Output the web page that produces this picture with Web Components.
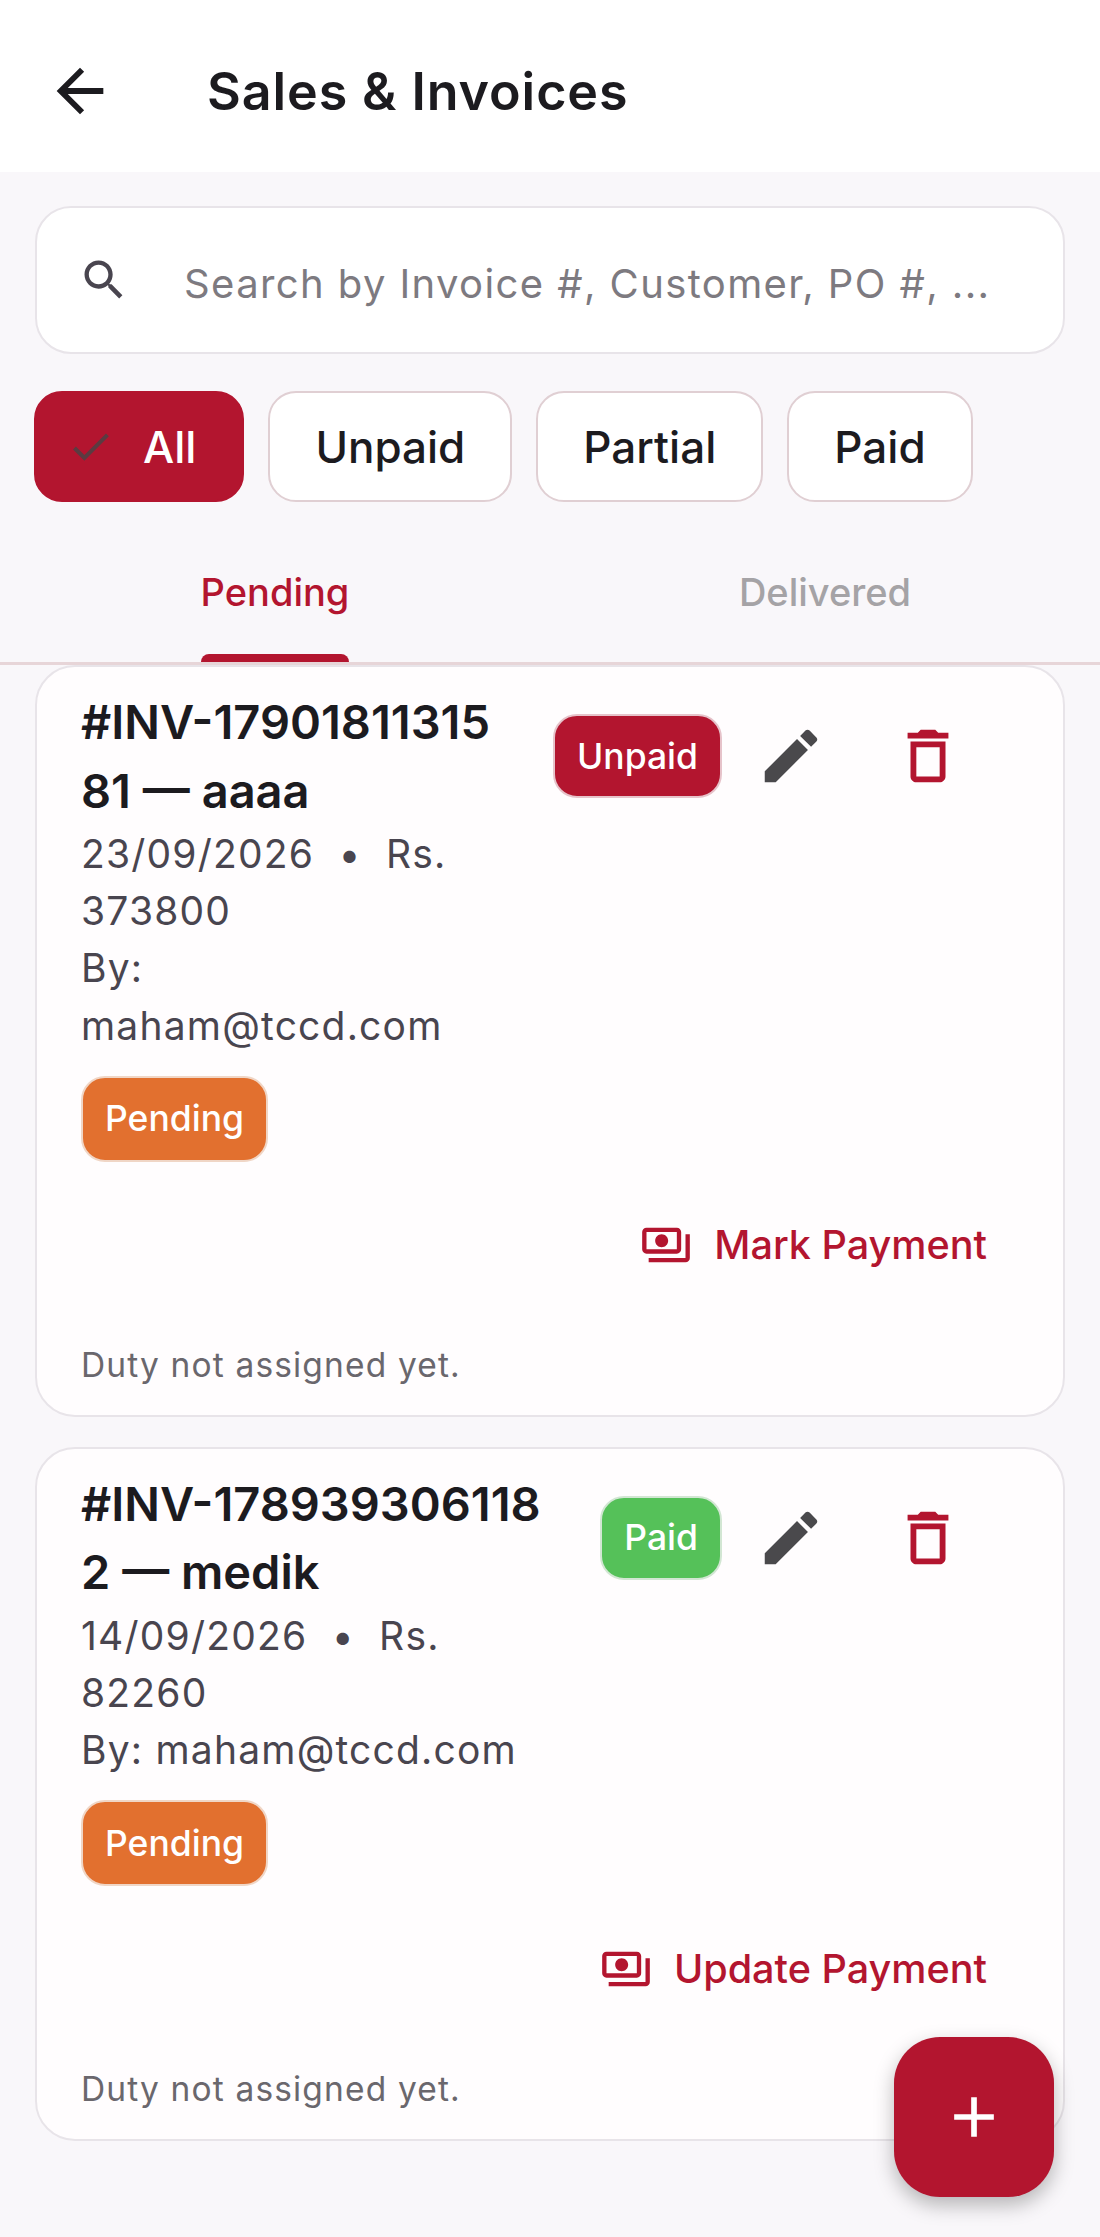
<!DOCTYPE html>
<html lang="en">
<head>
<meta charset="utf-8">
<title>Sales &amp; Invoices</title>
<style>
html, body { margin: 0; padding: 0; }
body {
  background: #f9f7fa;
  color: #1c1b1f;
  font-family: Inter, "Liberation Sans", sans-serif;
  width: 1100px;
  height: 2237px;
  overflow: hidden;
  position: relative;
}
</style>
</head>
<body>
<app-bar>Sales &amp; Invoices</app-bar>
<search-box placeholder="Search by Invoice #, Customer, PO #, ..."></search-box>
<chip-row>
  <filter-chip selected>All</filter-chip>
  <filter-chip>Unpaid</filter-chip>
  <filter-chip>Partial</filter-chip>
  <filter-chip>Paid</filter-chip>
</chip-row>
<tab-bar>
  <tab-item active>Pending</tab-item>
  <tab-item>Delivered</tab-item>
</tab-bar>
<invoice-list>
  <invoice-card>
    <span slot="title">#INV-1790181131581 — aaaa</span>
    <status-badge slot="status" kind="unpaid">Unpaid</status-badge>
    <span slot="meta">23/09/2026 &nbsp;•&nbsp; Rs. 373800<br>By: maham@tccd.com</span>
    <status-badge slot="delivery" kind="pending">Pending</status-badge>
    <span slot="action">Mark Payment</span>
    <span slot="note">Duty not assigned yet.</span>
  </invoice-card>
  <invoice-card>
    <span slot="title">#INV-1789393061182 — medik</span>
    <status-badge slot="status" kind="paid">Paid</status-badge>
    <span slot="meta">14/09/2026 &nbsp;•&nbsp; Rs. 82260<br>By: maham@tccd.com</span>
    <status-badge slot="delivery" kind="pending">Pending</status-badge>
    <span slot="action">Update Payment</span>
    <span slot="note">Duty not assigned yet.</span>
  </invoice-card>
</invoice-list>
<fab-button></fab-button>

<script>
const RED = '#b3152f';

function shadow(el, html) {
  el.attachShadow({ mode: 'open' }).innerHTML = html;
}

class AppBar extends HTMLElement {
  connectedCallback() {
    shadow(this, `
<style>
:host { display: flex; align-items: center; height: 172px; padding: 10px 0 0 45px; box-sizing: border-box; background: #fff; }
svg { width: 70px; height: 70px; fill: #1c1b1f; flex: none; }
.title { margin-left: 92px; font-size: 52px; letter-spacing: .9px; font-weight: 600; color: #1c1b1f; }
</style>
<svg viewBox="0 0 24 24"><path d="M20 11H7.83l5.59-5.59L12 4l-8 8 8 8 1.41-1.41L7.83 13H20v-2z"/></svg>
<div class="title"><slot></slot></div>`);
  }
}

class SearchBox extends HTMLElement {
  connectedCallback() {
    shadow(this, `
<style>
:host { display: flex; align-items: center; box-sizing: border-box; height: 148px; margin: 34px 35px 0; padding-left: 41px; background: #fff; border: 2px solid #e8e4e9; border-radius: 36px; }
svg { width: 52px; height: 52px; fill: #49454f; flex: none; }
.text { margin: 6px 0 0 54px; font-size: 40px; letter-spacing: 1.4px; color: #7d7a80; white-space: nowrap; }
</style>
<svg viewBox="0 0 24 24"><path d="M15.5 14h-.79l-.28-.27C15.41 12.59 16 11.11 16 9.5 16 5.91 13.09 3 9.5 3S3 5.91 3 9.5 5.91 16 9.5 16c1.61 0 3.09-.59 4.23-1.57l.27.28v.79l5 4.99L20.49 19l-4.99-5zm-6 0C7.01 14 5 11.99 5 9.5S7.01 5 9.5 5 14 7.01 14 9.5 11.99 14 9.5 14z"/></svg>
<div class="text">${this.getAttribute('placeholder')}</div>`);
  }
}

class ChipRow extends HTMLElement {
  connectedCallback() {
    shadow(this, `
<style>
:host { display: flex; gap: 24px; margin: 37px 34px 0; }
</style>
<slot></slot>`);
  }
}

class FilterChip extends HTMLElement {
  connectedCallback() {
    const on = this.hasAttribute('selected');
    shadow(this, `
<style>
:host { display: flex; align-items: center; box-sizing: border-box; height: 111px; padding: 0 45px; background: #fff; border: 2px solid #e0cfd3; border-radius: 28px; font-size: 44px; font-weight: 500; color: #1c1b1f; }
:host([selected]) { background: ${RED}; border-color: ${RED}; color: #fff; padding: 0 46px 0 30px; }
svg { width: 49px; height: 49px; fill: #5b3b41; margin-right: 28px; }
</style>
${on ? '<svg viewBox="0 0 24 24"><path d="M9 16.17L4.83 12l-1.41 1.41L9 19 21 7l-1.41-1.41z"/></svg>' : ''}<slot></slot>`);
  }
}

class TabBar extends HTMLElement {
  connectedCallback() {
    shadow(this, `
<style>
:host { display: grid; grid-template-columns: 1fr 1fr; height: 163px; box-sizing: border-box; border-bottom: 3px solid #e7d5d8; }
</style>
<slot></slot>`);
  }
}

class TabItem extends HTMLElement {
  connectedCallback() {
    shadow(this, `
<style>
:host { display: flex; flex-direction: column; align-items: center; font-size: 38px; font-weight: 500; color: #a5a3a6; }
:host([active]) { color: ${RED}; }
.wrap { display: flex; flex-direction: column; height: 160px; }
.label { margin-top: 68px; line-height: 44px; }
.line { margin-top: auto; height: 8px; border-radius: 8px 8px 0 0; }
:host([active]) .line { background: ${RED}; }
</style>
<div class="wrap"><div class="label"><slot></slot></div><div class="line"></div></div>`);
  }
}

class InvoiceList extends HTMLElement {
  connectedCallback() {
    shadow(this, `
<style>
:host { display: flex; flex-direction: column; gap: 30px; margin: 0 35px; }
</style>
<slot></slot>`);
  }
}

class StatusBadge extends HTMLElement {
  connectedCallback() {
    const colors = { unpaid: [RED, '#e6c3ca'], paid: ['#55c159', '#d2e6d3'], pending: ['#e2702f', '#f0d6c6'] };
    const c = colors[this.getAttribute('kind')];
    shadow(this, `
<style>
:host { display: inline-flex; align-items: center; box-sizing: border-box; height: 84px; padding: 0 22px; background: ${c[0]}; border: 2px solid ${c[1]}; border-radius: 24px; color: #fff; font-size: 35.5px; font-weight: 500; flex: none; }
:host([slot="delivery"]) { height: 86px; }
</style>
<slot></slot>`);
  }
}

class InvoiceCard extends HTMLElement {
  connectedCallback() {
    shadow(this, `
<style>
:host { display: block; box-sizing: border-box; padding: 21px 67px 28px 44px; background: #fffdfe; border: 2px solid #e8e4e9; border-radius: 40px; }
.top { display: flex; }
.main { flex: 1; min-width: 0; padding-right: 44px; }
.title { font-size: 47px; line-height: 68.5px; font-weight: 600; color: #1c1b1f; word-break: break-all; }
.meta { font-size: 39px; line-height: 57.2px; letter-spacing: 1.2px; color: #49454f; }
.delivery { margin-top: 22px; display: flex; }
.side { display: flex; align-items: center; height: 84px; margin-top: 26px; flex: none; }
.icon-btn { display: flex; justify-content: center; width: 137px; flex: none; }
.icon-btn svg { width: 70px; height: 70px; }
.action { display: flex; justify-content: flex-end; align-items: center; gap: 22px; margin: 49px 9px 0 0; height: 68px; font-size: 39.6px; font-weight: 500; color: ${RED}; }
.action svg { width: 52px; height: 52px; fill: ${RED}; }
.note { margin-top: 64px; font-size: 33.5px; line-height: 44px; letter-spacing: 1.15px; color: #6a676d; }
</style>
<div class="top">
  <div class="main">
    <div class="title"><slot name="title"></slot></div>
    <div class="meta"><slot name="meta"></slot></div>
    <div class="delivery"><slot name="delivery"></slot></div>
  </div>
  <div class="side">
    <slot name="status"></slot>
    <div class="icon-btn"><svg viewBox="0 0 24 24" fill="#4a494c"><path d="M3 17.25V21h3.75L17.81 9.94l-3.75-3.75L3 17.25zM20.71 7.04c.39-.39.39-1.02 0-1.41l-2.34-2.34c-.39-.39-1.02-.39-1.41 0l-1.83 1.83 3.75 3.75 1.83-1.83z"/></svg></div>
    <div class="icon-btn"><svg viewBox="0 0 24 24" fill="${RED}"><path d="M6 19c0 1.1.9 2 2 2h8c1.1 0 2-.9 2-2V7H6v12zM8 9h8v10H8V9zm7.5-5l-1-1h-5l-1 1H5v2h14V4h-3.5z"/></svg></div>
  </div>
</div>
<div class="action">
  <svg viewBox="0 0 24 24"><path d="M19 14V6c0-1.1-.9-2-2-2H3c-1.1 0-2 .9-2 2v8c0 1.1.9 2 2 2h14c1.1 0 2-.9 2-2zm-2 0H3V6h14v8zm-7-7c-1.66 0-3 1.34-3 3s1.34 3 3 3 3-1.34 3-3-1.34-3-3-3zm13 0v11c0 1.1-.9 2-2 2H4v-2h17V7h2z"/></svg>
  <slot name="action"></slot>
</div>
<div class="note"><slot name="note"></slot></div>`);
  }
}

class FabButton extends HTMLElement {
  connectedCallback() {
    shadow(this, `
<style>
:host { position: absolute; right: 46px; bottom: 40px; display: flex; align-items: center; justify-content: center; width: 160px; height: 160px; background: ${RED}; border-radius: 46px; box-shadow: 0 8px 20px rgba(0,0,0,.28); }
svg { width: 68px; height: 68px; fill: #fff; }
</style>
<svg viewBox="0 0 24 24"><path d="M19 13h-6v6h-2v-6H5v-2h6V5h2v6h6v2z"/></svg>`);
  }
}

customElements.define('app-bar', AppBar);
customElements.define('search-box', SearchBox);
customElements.define('chip-row', ChipRow);
customElements.define('filter-chip', FilterChip);
customElements.define('tab-bar', TabBar);
customElements.define('tab-item', TabItem);
customElements.define('invoice-list', InvoiceList);
customElements.define('status-badge', StatusBadge);
customElements.define('invoice-card', InvoiceCard);
customElements.define('fab-button', FabButton);
</script>
</body>
</html>
